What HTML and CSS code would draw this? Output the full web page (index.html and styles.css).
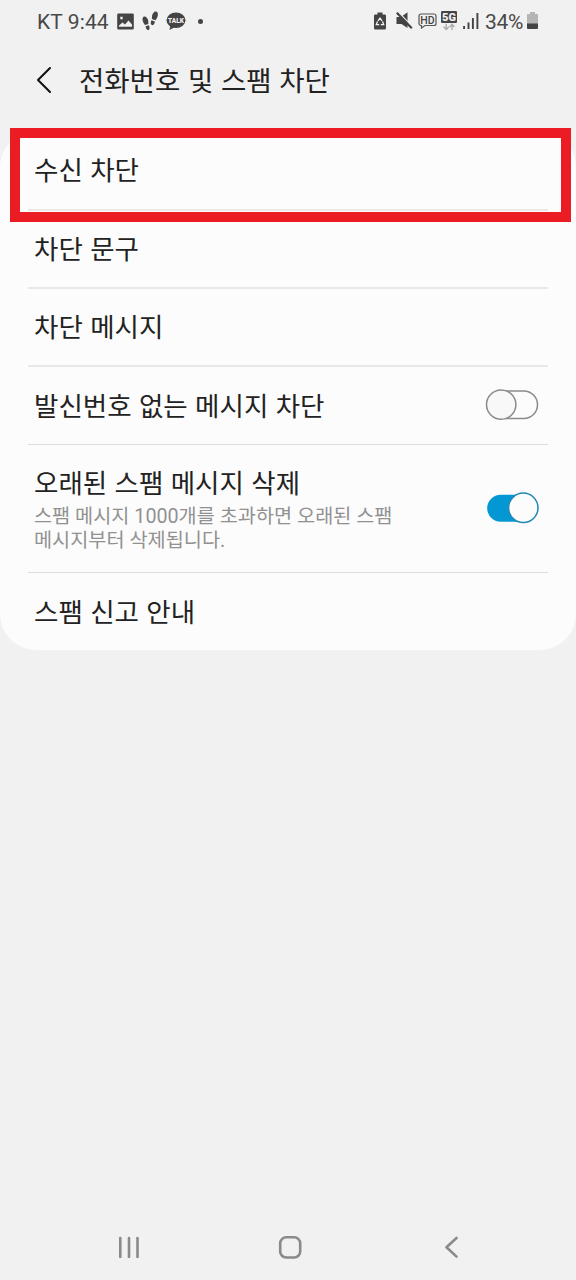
FILE: index.html
```html
<!DOCTYPE html>
<html lang="ko">
<head>
<meta charset="utf-8">
<title>전화번호 및 스팸 차단</title>
<link rel="stylesheet" href="styles.css">
</head>
<body>
<div class="screen">
  <div class="status">
    <div class="status-left">
      <span class="carrier">KT 9:44</span>
      <svg class="ic-picture" width="17" height="17" viewBox="0 0 17 17"><path fill="#444" fill-rule="evenodd" d="M1.500 0.500h14a1.300 1.300 0 0 1 1.300 1.300v13.400a1.300 1.300 0 0 1-1.300 1.300h-14a1.300 1.300 0 0 1-1.300-1.300V1.800a1.300 1.300 0 0 1 1.300-1.300zM2 13.800h13v-2.300l-3.500-4-3.500 4-2.500-2L2 12.500zM3.300 3.800v2.400h2.400v-2.400z"/></svg>
      <svg class="ic-steps" width="17" height="20" viewBox="0 0 17 20"><g fill="#444"><path d="M1.500 5.800C3.500 4.800 5.600 7 6.200 9.500L6.400 13 3 14C1 11.500-.5 7.500 1.500 5.800z"/><path d="M3.600 15.200l3.300-1c1 2 .9 4.300-.5 4.900-1.400.3-2.600-1.700-2.800-3.900z"/><path d="M14.700.8c-2-.9-4 1.100-4.600 3.700L9.900 8l3.500 1.200C15.600 6.500 17 2.500 14.700.8z"/><path d="M12.900 10.400l-3.400-1.100c-1.100 2-1 4.200.3 4.800 1.500.4 2.800-1.500 3.100-3.700z"/></g></svg>
      <svg class="ic-talk" width="20" height="19" viewBox="0 0 20 19"><ellipse cx="10" cy="8.300" rx="9.500" ry="7.800" fill="#444"/><path d="M4.500 13l-1 5 5.500-3z" fill="#444"/><text x="10" y="10.600" text-anchor="middle" class="talk-label">TALK</text></svg>
      <span class="dot"></span>
    </div>
    <div class="status-right">
      <svg class="ic-saver" width="14" height="18" viewBox="0 0 14 18"><path fill="#444" d="M4.500 0.500h5v2h2.300a1.200 1.200 0 0 1 1.200 1.200v12.600a1.200 1.200 0 0 1-1.200 1.200H2.200A1.200 1.200 0 0 1 1 16.300V3.700a1.200 1.200 0 0 1 1.200-1.200h2.300z"/><path d="M5 8.800L7 6l2 2.800M9.500 9.600l1.200 3H7.800M6.200 12.600H3.300l1.200-3" fill="none" stroke="#f1f1f1" stroke-width="1.300"/></svg>
      <svg class="ic-mute" width="17" height="17" viewBox="0 0 17 17"><path fill="#444" d="M0.500 5h4.500L11.500 0.300v15.700L5.500 12H0.500z"/><path d="M2.500 0l14 15" stroke="#f1f1f1" stroke-width="1.200"/><path d="M0.800 0.700l15 15.500" stroke="#444" stroke-width="2.200"/></svg>
      <svg class="ic-hd" width="19" height="16" viewBox="0 0 19 16"><path d="M3 1h13a2 2 0 0 1 2 2v7.500a2 2 0 0 1-2 2H7L3.500 15v-2.500H3a2 2 0 0 1-2-2V3a2 2 0 0 1 2-2z" fill="none" stroke="#555" stroke-width="1.200"/><text x="9.500" y="10.600" text-anchor="middle" class="hd-label">HD</text></svg>
      <svg class="ic-5g" width="16" height="20" viewBox="0 0 16 20"><rect x="0" y="0" width="16" height="12" rx="1.300" fill="#444"/><text x="8" y="10" text-anchor="middle" class="g-label">5G</text><path d="M5.200 12.800v5.500M2.600 15.800l2.600 2.800 2.600-2.800M11 19v-5.500M8.600 16l2.400-2.700 2.400 2.700" fill="none" stroke="#aaa" stroke-width="1.300"/></svg>
      <svg class="ic-signal" width="16" height="16" viewBox="0 0 16 16"><path d="M1.100 13v3M5.500 9.500v6.500M9.900 5v11M14.400 0v16" stroke="#444" stroke-width="1.900"/></svg>
      <span class="percent">34%</span>
      <svg class="ic-battery" width="11" height="17" viewBox="0 0 11 17"><path fill="#b5b5b5" d="M3 0h5v2h3v10H0V2h3z"/><path fill="#444" d="M0 11.500h11V16a1 1 0 0 1-1 1H1a1 1 0 0 1-1-1z"/></svg>
    </div>
  </div>

  <header class="header">
    <svg class="back" width="16" height="28" viewBox="0 0 16 28"><path d="M14 2L2 14l12 12" fill="none" stroke="#111" stroke-width="2" stroke-linecap="round" stroke-linejoin="round"/></svg>
    <h1 class="title">전화번호 및 스팸 차단</h1>
  </header>

  <main class="card">
    <div class="row"><span class="label">수신 차단</span><div class="highlight"></div></div>
    <div class="row"><span class="label">차단 문구</span></div>
    <div class="row"><span class="label">차단 메시지</span></div>
    <div class="row row-thin">
      <span class="label">발신번호 없는 메시지 차단</span>
      <svg class="switch" width="54" height="32" viewBox="0 0 54 32"><rect x="2" y="2" width="50.500" height="27.500" rx="13.750" fill="#fcfcfc" stroke="#8b8b8b" stroke-width="1.500"/><circle cx="16.200" cy="15.600" r="14.700" fill="#f8f8f8" stroke="#8b8b8b" stroke-width="1.500"/></svg>
    </div>
    <div class="row row-thin">
      <div class="texts">
        <span class="label">오래된 스팸 메시지 삭제</span>
        <p class="desc">스팸 메시지 1000개를 초과하면 오래된 스팸<br>메시지부터 삭제됩니다.</p>
      </div>
      <svg class="switch" width="54" height="32" viewBox="0 0 54 32"><rect x="2.200" y="2.700" width="50" height="27" rx="13.500" fill="#0398d4"/><circle cx="38.300" cy="15.800" r="14.700" fill="#fcfcfc" stroke="#2387b4" stroke-width="1.500"/></svg>
    </div>
    <div class="row"><span class="label">스팸 신고 안내</span></div>
  </main>

  <nav class="nav">
    <svg width="22" height="22" viewBox="0 0 22 22"><path d="M2.300 2v19M11 2v19M19.500 2v19" stroke="#8a8a8a" stroke-width="2.600" stroke-linecap="round"/></svg>
    <svg class="nav-home" width="24" height="24" viewBox="0 0 24 24"><rect x="2.200" y="2.300" width="20" height="20.200" rx="6" fill="none" stroke="#8a8a8a" stroke-width="2.600"/></svg>
    <svg width="14" height="22" viewBox="0 0 14 22"><path d="M12.500 2L2.500 11.300l10 9.300" fill="none" stroke="#8a8a8a" stroke-width="2.600" stroke-linecap="round" stroke-linejoin="round"/></svg>
  </nav>
</div>
</body>
</html>
```
FILE: styles.css
```css
* { box-sizing: border-box; }
body {
  margin: 0;
  background: #f1f1f1;
  font-family: "Noto Sans CJK KR", sans-serif;
  color: #222;
}
svg { display: block; flex: none; }
.screen {
  width: 576px;
  height: 1280px;
  display: flex;
  flex-direction: column;
  overflow: hidden;
}
.status {
  height: 42px;
  flex: none;
  padding: 0 38px 0 37px;
  display: flex;
  justify-content: space-between;
  font-family: Roboto, sans-serif;
  font-size: 21px;
  line-height: 44px;
  color: #484848;
}
.status-left, .status-right { display: flex; align-items: flex-start; white-space: nowrap; }
.carrier { width: 80px; letter-spacing: 0.1px; }
.ic-picture { margin-top: 13px; }
.ic-steps { margin: 11px 0 0 8px; }
.ic-talk { margin: 12px 0 0 7px; }
.dot { width: 5px; height: 5px; border-radius: 50%; background: #444; margin: 19px 0 0 12px; }
.ic-saver { margin-top: 12px; }
.ic-mute { margin: 12px 0 0 9px; }
.ic-hd { margin: 13px 0 0 5px; }
.ic-5g { margin: 11px 0 0 4px; }
.ic-signal { margin: 13px 0 0 6px; }
.percent { margin-left: 6px; width: 42px; letter-spacing: -0.3px; }
.ic-battery { margin-top: 12px; }
.talk-label { font: 900 6.500px Roboto, sans-serif; fill: #f1f1f1; }
.hd-label { font: 500 10.500px Roboto, sans-serif; fill: #444; }
.g-label { font: 900 11px Roboto, sans-serif; fill: #f1f1f1; }
.header {
  height: 89px;
  flex: none;
  padding: 0 0 13px 36px;
  display: flex;
  align-items: center;
}
.title {
  margin: 0 0 0 27px;
  padding-bottom: 2px;
  font-size: 27.500px;
  font-weight: 400;
  line-height: 40px;
  white-space: nowrap;
}
.card {
  flex: none;
  height: 519px;
  background: #fcfcfc;
  border-radius: 36px;
  padding: 0 28px;
  display: grid;
  grid-template-rows: 80px 78px 78px 78px 128px 77px;
}
.row {
  position: relative;
  padding: 0 8px 2px 6px;
  display: flex;
  align-items: center;
  justify-content: space-between;
  border-bottom: 2px solid #e8e8e9;
}
.row-thin { padding-right: 9px; padding-bottom: 1px; border-bottom: 1px solid #dededf; }
.row:last-child { border-bottom: 0; }
.label { display: block; font-size: 26.500px; line-height: 36px; white-space: nowrap; }
.desc {
  margin: 5px 0 -1px;
  font-family: Roboto, "Noto Sans CJK KR", sans-serif;
  font-size: 19.700px;
  line-height: 24px;
  color: #919191;
  white-space: nowrap;
}
.highlight {
  position: absolute;
  left: -18px;
  top: -3px;
  width: 561px;
  height: 94px;
  border: 10px solid #ec1c24;
  z-index: 1;
}
.nav {
  margin-top: auto;
  height: 66px;
  padding: 0 117px 0 118px;
  display: flex;
  align-items: center;
}
.nav-home { margin: 0 142px 0 138px; }
```
